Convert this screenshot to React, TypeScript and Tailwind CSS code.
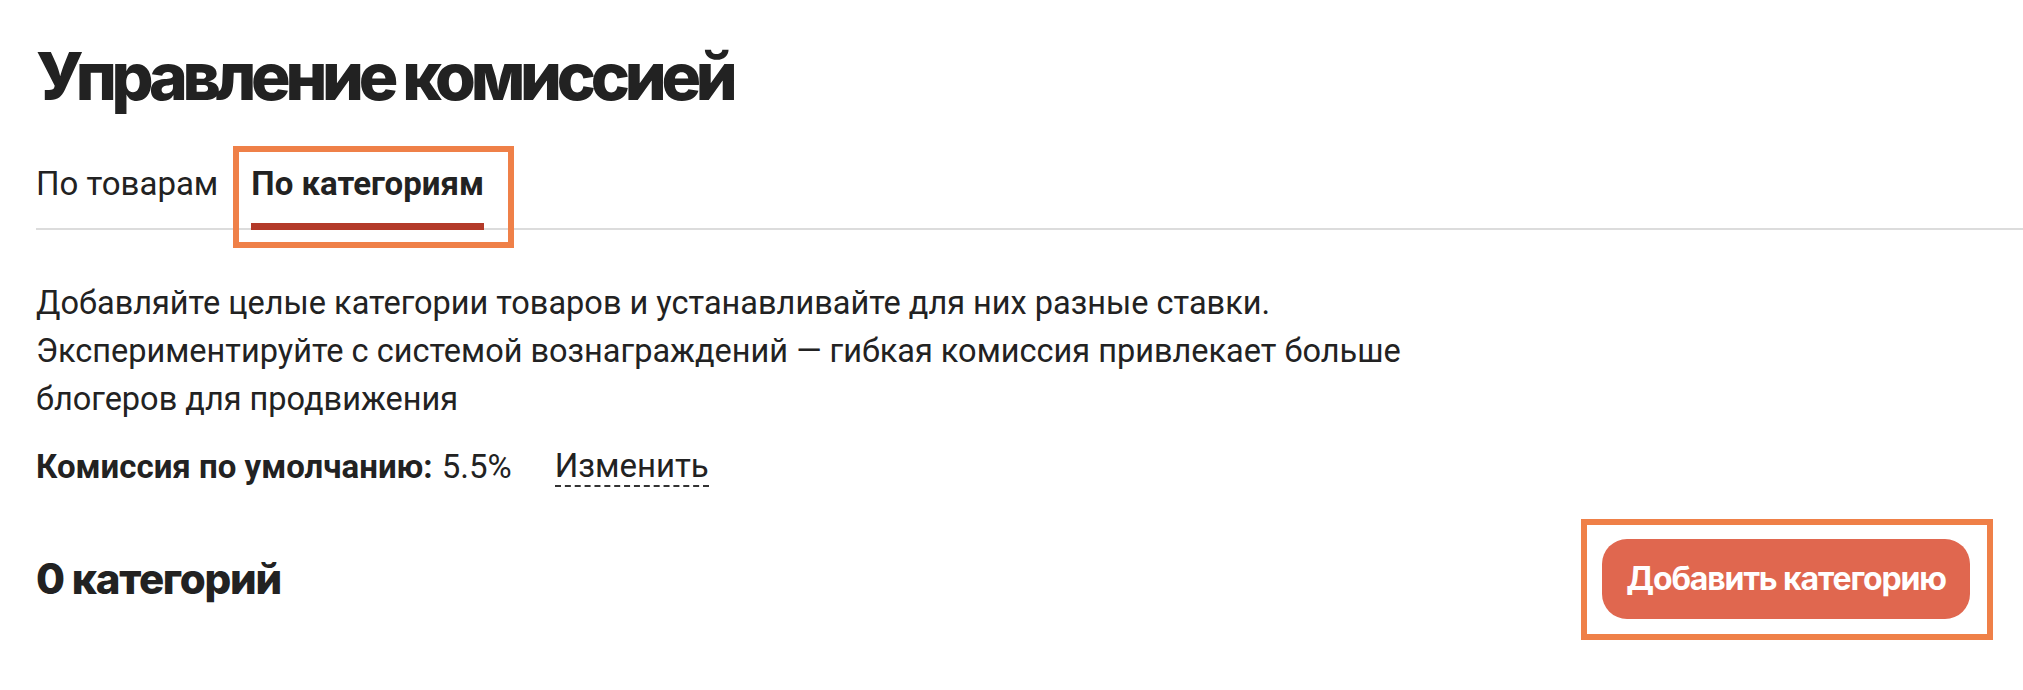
import * as React from "react";

type Tab = { id: string; label: string };

const TABS: Tab[] = [
  { id: "products", label: "По товарам" },
  { id: "categories", label: "По категориям" },
];

function Highlight({ className }: { className: string }) {
  // annotation frame drawn over the screenshot
  return <span aria-hidden className={`pointer-events-none absolute border-[6px] border-[#ef8048] ${className}`} />;
}

export default function App() {
  const [active, setActive] = React.useState("categories");
  const categories: string[] = [];

  return (
    <div className="min-h-screen bg-white pl-[36px] text-[#222] font-['Roboto',sans-serif]">
      <h1 className="pt-[43px] font-['Inter',sans-serif] text-[66px] leading-[66px] font-extrabold tracking-[-0.08em]">
        Управление комиссией
      </h1>

      <div className="mt-[55px] flex gap-[33px] border-b-2 border-[#dcdcdc]">
        {TABS.map((t) => {
          const on = t.id === active;
          return (
            <button
              key={t.id}
              onClick={() => setActive(t.id)}
              className={`relative -mb-[2px] text-[33px] leading-[40px] ${
                on ? "border-b-[7px] border-[#b33a29] pb-[19px] font-bold" : "pb-[26px]"
              }`}
            >
              {t.label}
              {on && <Highlight className="-top-[18px] -left-[18px] -right-[30px] -bottom-[25px]" />}
            </button>
          );
        })}
      </div>

      <p className="mt-[49px] max-w-[1440px] text-[32.5px] leading-[48px]">
        Добавляйте целые категории товаров и устанавливайте для них разные ставки.
        <br />
        Экспериментируйте с системой вознаграждений — гибкая комиссия привлекает больше блогеров для продвижения
      </p>

      <div className="mt-[20px] flex items-center text-[33px] leading-[48px]">
        <span className="font-bold">Комиссия по умолчанию:</span>
        <span className="ml-[9px]">5.5%</span>
        <button className="ml-[43px] border-b-2 border-dashed border-[#333] leading-[38px]">Изменить</button>
      </div>

      <div className="mt-[48px] flex items-center justify-between pr-[53px]">
        <h2 className="font-['Inter',sans-serif] text-[42px] leading-[48px] font-extrabold tracking-[-0.03em]">
          {categories.length} категорий
        </h2>
        <div className="relative">
          <button className="h-[80px] rounded-[25px] bg-[#e0674f] px-[24px] font-['Inter',sans-serif] text-[32px] font-bold tracking-[-0.035em] text-white">
            Добавить категорию
          </button>
          <Highlight className="-top-[20px] -left-[21px] -right-[23px] -bottom-[21px]" />
        </div>
      </div>
    </div>
  );
}
